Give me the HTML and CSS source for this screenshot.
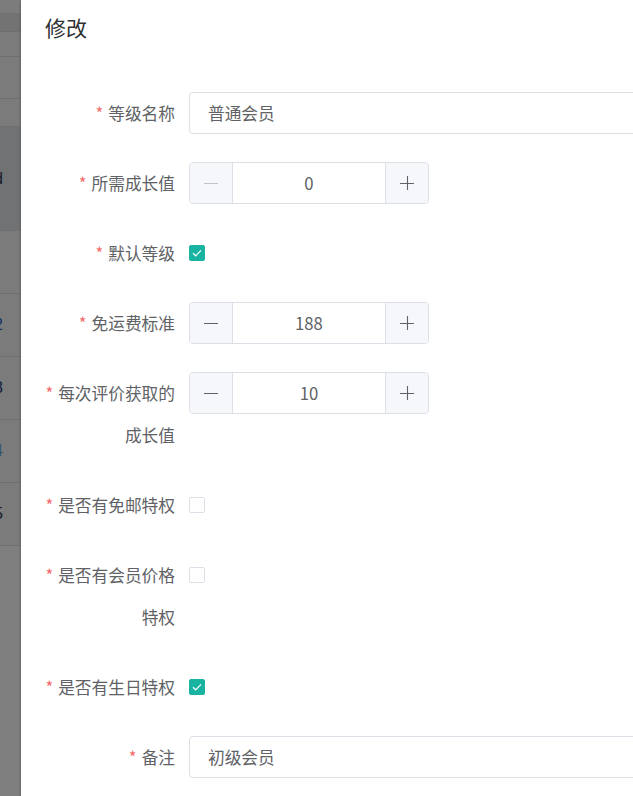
FILE: index.html
```html
<!DOCTYPE html>
<html lang="zh">
<head>
<meta charset="utf-8">
<title>修改</title>
<link rel="stylesheet" href="styles.css">
</head>
<body>
<div class="page">
  <div class="topbar"></div>
  <div class="thead"></div>
  <div class="trow h25"></div>
  <div class="trow h42"></div>
  <div class="trow h28"></div>
  <div class="trow h104 hl"><span class="frag"><span class="c-dark">id</span></span></div>
  <div class="trow h63"></div>
  <div class="trow h63"><span class="frag"><span class="c-blue">12</span></span></div>
  <div class="trow h63"><span class="frag"><span class="c-navy">13</span></span></div>
  <div class="trow h63"><span class="frag"><span class="c-light">14</span></span></div>
  <div class="trow h63"><span class="frag"><span class="c-dark">15</span></span></div>
</div>
<div class="mask"></div>
<div class="dialog">
  <div class="dialog-header"><span class="dialog-title">修改</span></div>
  <div class="dialog-body">
    <div class="form-item">
      <label class="form-label"><span class="req">*</span>等级名称</label>
      <div class="form-content"><div class="input">普通会员</div></div>
    </div>
    <div class="form-item">
      <label class="form-label"><span class="req">*</span>所需成长值</label>
      <div class="form-content">
        <div class="number">
          <span class="num-btn dec disabled"><svg width="14" height="14" viewBox="0 0 14 14"><path d="M0 7.5H14" stroke="currentColor" stroke-width="1.1"/></svg></span>
          <span class="num-value">0</span>
          <span class="num-btn inc"><svg width="14" height="14" viewBox="0 0 14 14"><path d="M0 7.5H14M7.5 0V14" stroke="currentColor" stroke-width="1.1"/></svg></span>
        </div>
      </div>
    </div>
    <div class="form-item">
      <label class="form-label"><span class="req">*</span>默认等级</label>
      <div class="form-content"><span class="checkbox checked"><svg width="14" height="14" viewBox="0 0 14 14"><path d="M3 7.2L5.7 9.8L11 4.4" fill="none" stroke="#fff" stroke-width="1.2"/></svg></span></div>
    </div>
    <div class="form-item">
      <label class="form-label"><span class="req">*</span>免运费标准</label>
      <div class="form-content">
        <div class="number">
          <span class="num-btn dec"><svg width="14" height="14" viewBox="0 0 14 14"><path d="M0 7.5H14" stroke="currentColor" stroke-width="1.1"/></svg></span>
          <span class="num-value">188</span>
          <span class="num-btn inc"><svg width="14" height="14" viewBox="0 0 14 14"><path d="M0 7.5H14M7.5 0V14" stroke="currentColor" stroke-width="1.1"/></svg></span>
        </div>
      </div>
    </div>
    <div class="form-item">
      <label class="form-label"><span class="req">*</span>每次评价获取的<br>成长值</label>
      <div class="form-content">
        <div class="number">
          <span class="num-btn dec"><svg width="14" height="14" viewBox="0 0 14 14"><path d="M0 7.5H14" stroke="currentColor" stroke-width="1.1"/></svg></span>
          <span class="num-value">10</span>
          <span class="num-btn inc"><svg width="14" height="14" viewBox="0 0 14 14"><path d="M0 7.5H14M7.5 0V14" stroke="currentColor" stroke-width="1.1"/></svg></span>
        </div>
      </div>
    </div>
    <div class="form-item">
      <label class="form-label"><span class="req">*</span>是否有免邮特权</label>
      <div class="form-content"><span class="checkbox"></span></div>
    </div>
    <div class="form-item">
      <label class="form-label"><span class="req">*</span>是否有会员价格<br>特权</label>
      <div class="form-content"><span class="checkbox"></span></div>
    </div>
    <div class="form-item">
      <label class="form-label"><span class="req">*</span>是否有生日特权</label>
      <div class="form-content"><span class="checkbox checked"><svg width="14" height="14" viewBox="0 0 14 14"><path d="M3 7.2L5.7 9.8L11 4.4" fill="none" stroke="#fff" stroke-width="1.2"/></svg></span></div>
    </div>
    <div class="form-item">
      <label class="form-label"><span class="req">*</span>备注</label>
      <div class="form-content"><div class="input">初级会员</div></div>
    </div>
  </div>
</div>
</body>
</html>
```
FILE: styles.css
```css
html, body {
  margin: 0;
  padding: 0;
}
body {
  width: 633px;
  height: 796px;
  overflow: hidden;
  position: relative;
  background: #fff;
  font-family: "Noto Sans CJK SC", "Noto Sans", sans-serif;
}

/* underlying page */
.page {
  display: flex;
  flex-direction: column;
  width: 633px;
}
.topbar {
  height: 13px;
  background: #f8f8f8;
}
.thead {
  height: 18px;
  background: #e6e6e6;
  border-bottom: 1px solid #dcdcdc;
}
.trow {
  box-sizing: border-box;
  border-bottom: 1px solid #e0e0e0;
  display: flex;
  align-items: center;
  background: #f6f6f6;
}
.trow.hl {
  background: #e3e5e9;
}
.h25 { height: 25px; }
.h42 { height: 42px; }
.h28 { height: 28px; }
.h104 { height: 104px; }
.h63 { height: 63px; }
.frag {
  width: 3px;
  display: flex;
  justify-content: flex-end;
  font-size: 16px;
  font-family: "Liberation Sans", sans-serif;
  white-space: nowrap;
}
.c-dark { color: #2f3b52; }
.c-blue { color: #2f6fd0; }
.c-navy { color: #273f7a; }
.c-light { color: #6aa8d8; }

.mask {
  position: absolute;
  inset: 0;
  background: rgba(0, 0, 0, 0.5);
}

/* dialog */
.dialog {
  position: absolute;
  left: 21px;
  top: 0;
  width: 760px;
  height: 830px;
  background: #fff;
  box-shadow: 0 1px 3px rgba(0, 0, 0, 0.3);
}
.dialog-header {
  padding: 15px 24px 12px;
  line-height: 25px;
}
.dialog-title {
  font-size: 21px;
  color: #303133;
}
.dialog-body {
  padding: 38px 24px 0;
}
.form-item {
  display: flex;
  margin-bottom: 28px;
}
.form-label {
  width: 144px;
  flex: none;
  box-sizing: border-box;
  padding-right: 14px;
  text-align: right;
  font-size: 16.7px;
  line-height: 42px;
  color: #606266;
  white-space: nowrap;
}
.req {
  color: #f56c6c;
  margin-right: 5px;
}
.form-content {
  flex: 1;
  min-width: 0;
  display: flex;
  align-items: flex-start;
  min-height: 42px;
}
.input {
  width: 100%;
  height: 42px;
  box-sizing: border-box;
  border: 1px solid #dcdfe6;
  border-radius: 4px;
  padding: 0 18px;
  font-size: 16.7px;
  line-height: 40px;
  color: #606266;
}
.number {
  width: 240px;
  height: 42px;
  box-sizing: border-box;
  display: flex;
  border: 1px solid #dcdfe6;
  border-radius: 4px;
  overflow: hidden;
}
.num-btn {
  width: 43px;
  flex: none;
  box-sizing: border-box;
  background: #f5f7fa;
  display: flex;
  align-items: center;
  justify-content: center;
  color: #606266;
}
.num-btn.dec {
  border-right: 1px solid #dcdfe6;
}
.num-btn.inc {
  border-left: 1px solid #dcdfe6;
}
.num-btn.disabled {
  color: #c0c4cc;
}
.num-value {
  flex: 1;
  text-align: center;
  font-size: 16.7px;
  line-height: 40px;
  color: #606266;
}
.checkbox {
  width: 16px;
  height: 16px;
  margin-top: 13px;
  box-sizing: border-box;
  border: 1px solid #dcdfe6;
  border-radius: 2px;
  background: #fff;
  display: flex;
  align-items: center;
  justify-content: center;
}
.checkbox.checked {
  background: #19b3a1;
  border-color: #19b3a1;
}
```
